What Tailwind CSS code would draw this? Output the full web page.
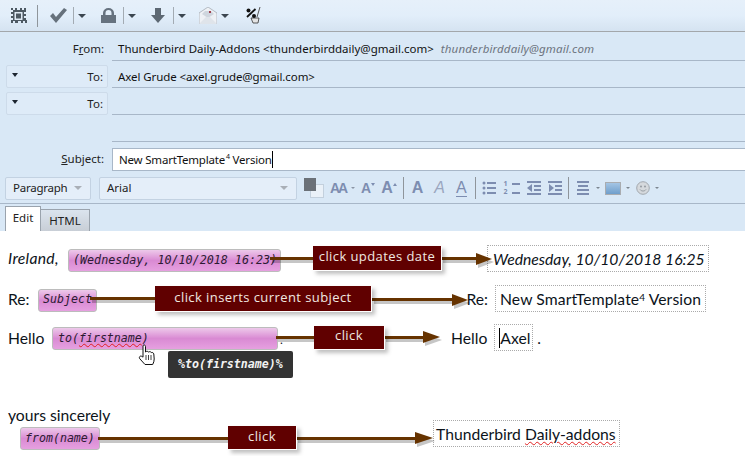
<!DOCTYPE html>
<html>
<head>
    <title>SmartTemplate compose</title>
    <meta charset="utf-8">
    <script src="https://cdn.jsdelivr.net/npm/@tailwindcss/browser@4"></script>
</head>
<body class="bg-white">
<div class="w-[745px] h-[456px] overflow-hidden relative font-['Noto_Sans',sans-serif] text-[11.5px] text-[#111]">

    <!-- Main toolbar -->
    <div class="h-[32px] flex items-center bg-gradient-to-b from-[#e6f0fa] via-[#e2eefa] to-[#d5e3f1] border-b border-[#a3a7ab] relative text-[#5f6b78]">
        <svg class="ml-[10px] w-[17px] h-[16px]" viewBox="0 0 17 16" fill="#4d5963"><path d="M1 0h2v2h2V0h2v2h3V0h2v2h2V0h2v4h-2v2h2v2h-2v2h2v2h2v3h-3v-2h-2v2h-2v-2h-3v2H5v-2H3v2H1v-3h2v-2H1V8h2V6H1V4h2V2H1z" /><rect x="4.500" y="4" width="8" height="8" fill="#dfeaf5"/><rect x="6" y="5.500" width="5" height="5" /></svg>
        <div class="ml-[10px] w-px h-[22px] bg-[#8f959b]"></div>
        <svg class="ml-[12px] w-[17px] h-[15px]" viewBox="0 0 17 15" fill="#66717c"><path d="M0 8l3-3 3 4 8-9 3 2-11 13z"/></svg>
        <div class="ml-[6px] w-px h-[17px] bg-[#a3abb3]"></div>
        <div class="ml-[4px] w-0 h-0 border-x-[4px] border-x-transparent border-t-[4px] border-t-[#3c4650]"></div>
        <svg class="ml-[15px] w-[15px] h-[15px]" viewBox="0 0 15 15" fill="#66727f"><path d="M0 7h2V5a5.500 5 0 0 1 11 0v2h2v8H0zM4.500 7h6V5a3 3 0 0 0-6 0z"/></svg>
        <div class="ml-[7px] w-px h-[17px] bg-[#a3abb3]"></div>
        <div class="ml-[4px] w-0 h-0 border-x-[4px] border-x-transparent border-t-[4px] border-t-[#3c4650]"></div>
        <svg class="ml-[15px] w-[14px] h-[15px]" viewBox="0 0 14 15" fill="#5d6873"><path d="M4 0h6v7h4l-7 8-7-8h4z"/></svg>
        <div class="ml-[8px] w-px h-[17px] bg-[#a3abb3]"></div>
        <div class="ml-[4px] w-0 h-0 border-x-[4px] border-x-transparent border-t-[4px] border-t-[#3c4650]"></div>
        <svg class="ml-[13px] w-[18px] h-[17px]" viewBox="0 0 18 17"><path d="M0 6L9 0l9 6v11H0z" fill="#eef1f5" stroke="#a5acb5" stroke-width=".8"/><path d="M3 7l3-3h6l3 3-6 4z" fill="#cfd6de"/><rect x="10" y="4" width="2" height="2" fill="#a0424f"/><path d="M0 17l7-7h4l7 7z" fill="#dfe4ea"/></svg>
        <div class="ml-[4px] w-0 h-0 border-x-[4px] border-x-transparent border-t-[4px] border-t-[#3c4650]"></div>
        <svg class="ml-[17px] w-[15px] h-[17px]" viewBox="0 0 15 17"><path d="M11 10L14 0" stroke="#555" stroke-width="1" fill="none"/><path d="M5 11h8l-1 5H7z" fill="#e4e4e4" stroke="#333" stroke-width=".8"/><circle cx="2.500" cy="3.500" r="2" fill="#111"/><circle cx="8" cy="9" r="2" fill="#111"/><path d="M1 10L9.500 2" stroke="#111" stroke-width="1.800"/></svg>
    </div>

    <!-- Address header -->
    <div class="h-[199px] bg-[#d9e8f6] relative">
        <div class="flex h-[29px]">
            <div class="w-[104px] text-right pt-[9px] leading-[16px] text-[#222]">F<u>r</u>om:</div>
            <div class="ml-[8px] flex-1 border-b border-[#a8b7c8] pl-[6px] pt-[9px] leading-[16px] whitespace-nowrap">Thunderbird Daily-Addons &lt;thunderbirddaily@gmail.com&gt;<span class="ml-[7px] italic text-[#6d7480] tracking-[.15px]">thunderbirddaily@gmail.com</span></div>
        </div>
        <div class="flex h-[27px]">
            <div class="ml-[6px] mt-[4px] w-[102px] h-[23px] border border-[#cddbea] rounded-[2px] bg-[#deebf8] flex items-center justify-between pl-[5px] pr-[4px]">
                <span class="w-0 h-0 border-x-[3.500px] border-x-transparent border-t-[4px] border-t-[#1c2530] mb-[3px]"></span>
                <span class="text-[#222]">To:</span>
            </div>
            <div class="ml-[4px] flex-1 border-b border-[#a8b7c8] pl-[6px] pt-[8px] leading-[16px] tracking-[-.09px]">Axel Grude &lt;axel.grude@gmail.com&gt;</div>
        </div>
        <div class="flex h-[27px]">
            <div class="ml-[6px] mt-[4px] w-[102px] h-[23px] border border-[#cddbea] rounded-[2px] bg-[#deebf8] flex items-center justify-between pl-[5px] pr-[4px]">
                <span class="w-0 h-0 border-x-[3.500px] border-x-transparent border-t-[4px] border-t-[#1c2530] mb-[3px]"></span>
                <span class="text-[#222]">To:</span>
            </div>
            <div class="ml-[4px] flex-1 border-b border-[#a8b7c8]"></div>
        </div>
        <div class="h-[27px] ml-[112px] border-b border-[#a8b7c8]"></div>
        <div class="flex h-[23px] mt-[6px]">
            <div class="w-[104px] text-right leading-[22px] text-[#222]"><u>S</u>ubject:</div>
            <div class="ml-[8px] flex-1 bg-white border-y border-l border-[#a8b7c8] pl-[6px] leading-[21px] flex items-center tracking-[-.2px]">New SmartTemplate<sup class="text-[7px] top-[-3px] ml-px">4</sup>&nbsp;Version<span class="w-px h-[17px] bg-black"></span></div>
        </div>

        <!-- Format bar -->
        <div class="h-[33px] pt-[2px] flex items-center border-b border-[#a8b7c8] relative text-[#7d8db0]">
            <div class="ml-[5px] w-[86px] h-[23px] bg-[#e4eef9] border border-[#c3d2e2] rounded-[2px] flex items-center justify-between pl-[7px] pr-[8px] text-[#222] tracking-[-.25px]">Paragraph<span class="w-0 h-0 border-x-[4px] border-x-transparent border-t-[4px] border-t-[#a9afb7]"></span></div>
            <div class="ml-[8px] w-[198px] h-[23px] bg-[#e4eef9] border border-[#c3d2e2] rounded-[2px] flex items-center justify-between pl-[7px] pr-[8px] text-[#222]">Arial<span class="w-0 h-0 border-x-[4px] border-x-transparent border-t-[4px] border-t-[#a9afb7]"></span></div>
            <div class="ml-[7px] w-[21px] h-[21px] relative">
                <div class="absolute left-[6px] top-[6px] w-[14px] h-[14px] bg-[#eaf1f8] border border-[#c3d0dd]"></div>
                <div class="absolute left-0 top-0 w-[12px] h-[13px] bg-[#6b7178]"></div>
            </div>
            <span class="ml-[5px] w-[20px] font-bold text-[14px] leading-none font-['Liberation_Sans',sans-serif] tracking-[-2px]">AA</span>
            <span class="ml-[1px] w-0 h-0 border-x-[2px] border-x-transparent border-t-[2px] border-t-[#8b95a5]"></span>
            <span class="ml-[6px] font-bold text-[14px] leading-none font-['Liberation_Sans',sans-serif]">A</span>
            <span class="w-0 h-0 border-x-[2px] border-x-transparent border-t-[3px] border-t-[#7d8db0] mb-[8px]"></span>
            <span class="ml-[6px] font-bold text-[16px] leading-none font-['Liberation_Sans',sans-serif]">A</span>
            <span class="w-0 h-0 border-x-[2px] border-x-transparent border-b-[3px] border-b-[#7d8db0] mb-[8px]"></span>
            <div class="ml-[6px] w-px h-[22px] bg-[#8f959b]"></div>
            <span class="ml-[8px] font-bold text-[16px] leading-none font-['Liberation_Sans',sans-serif]">A</span>
            <span class="ml-[11px] italic text-[16px] leading-none font-['Liberation_Sans',sans-serif] text-[#9aa6bf]">A</span>
            <span class="ml-[11px] text-[16px] leading-none border-b border-[#7d8db0] font-['Liberation_Sans',sans-serif]">A</span>
            <div class="ml-[8px] w-px h-[22px] bg-[#8f959b]"></div>
            <svg class="ml-[6px] w-[14px] h-[14px]" viewBox="0 0 14 14" fill="#7d8db0"><circle cx="2" cy="2" r="1.500"/><circle cx="2" cy="7" r="1.500"/><circle cx="2" cy="12" r="1.500"/><rect x="5" y="1" width="9" height="2"/><rect x="5" y="6" width="9" height="2"/><rect x="5" y="11" width="9" height="2"/></svg>
            <div class="ml-[8px] w-[16px] h-[14px] relative">
                <span class="absolute left-0 top-[-1px] text-[7px] leading-[8px] font-bold">1</span>
                <span class="absolute left-0 top-[7px] text-[7px] leading-[8px] font-bold">2</span>
                <span class="absolute right-0 top-[2px] w-[8px] h-[2px] bg-[#7d8db0]"></span>
                <span class="absolute right-0 top-[11px] w-[8px] h-[2px] bg-[#7d8db0]"></span>
            </div>
            <svg class="ml-[7px] w-[14px] h-[14px]" viewBox="0 0 14 14" fill="#7d8db0"><rect width="14" height="2"/><rect y="12" width="14" height="2"/><rect x="7" y="4" width="7" height="2"/><rect x="7" y="8" width="7" height="2"/><path d="M0 7l5-4v8z"/></svg>
            <svg class="ml-[7px] w-[14px] h-[14px]" viewBox="0 0 14 14" fill="#7d8db0"><rect width="14" height="2"/><rect y="12" width="14" height="2"/><rect x="7" y="4" width="7" height="2"/><rect x="7" y="8" width="7" height="2"/><path d="M6 7L1 3v8z"/></svg>
            <div class="ml-[6px] w-px h-[22px] bg-[#8f959b]"></div>
            <svg class="ml-[8px] w-[13px] h-[14px]" viewBox="0 0 13 14" fill="#7d8db0"><rect width="12" height="2"/><rect x="1" y="4" width="10" height="2"/><rect y="8" width="12" height="2"/><rect y="12" width="12" height="2"/></svg>
            <span class="ml-[6px] w-0 h-0 border-x-[2px] border-x-transparent border-t-[2px] border-t-[#7c8590]"></span>
            <div class="ml-[5px] w-[16px] h-[13px] border border-[#a9acb0] bg-gradient-to-b from-[#a4c5e4] to-[#6f9ecb]"></div>
            <span class="ml-[5px] w-0 h-0 border-x-[2px] border-x-transparent border-t-[2px] border-t-[#7c8590]"></span>
            <svg class="ml-[6px] w-[14px] h-[14px]" viewBox="0 0 14 14"><circle cx="7" cy="7" r="6.300" fill="#d5d9dd" stroke="#a2a8ae" stroke-width="1"/><circle cx="5" cy="5.500" r=".9" fill="#8d949b"/><circle cx="9" cy="5.500" r=".9" fill="#8d949b"/><path d="M4 8.500c1.500 2 4.500 2 6 0" stroke="#8d949b" stroke-width=".9" fill="none"/></svg>
            <span class="ml-[5px] w-0 h-0 border-x-[2px] border-x-transparent border-t-[2px] border-t-[#7c8590]"></span>
        </div>

        <!-- Edit / HTML tabs -->
        <div class="h-[27px] flex items-end pl-[5px]">
            <div class="w-[36px] h-[25px] bg-white border-x border-t border-[#9aa3ad] text-center leading-[22px] text-[#222] relative z-10">Edit</div>
            <div class="w-[49px] h-[22px] bg-gradient-to-b from-[#dbe4ee] to-[#c8ced6] border-r border-t border-[#9aa3ad] text-center leading-[22px] text-[#222]">HTML</div>
        </div>
    </div>

    <!-- Message body -->
    <div class="relative font-['Lato',sans-serif] text-[15.7px] text-[#0c131a] pt-[13px]">
        <div class="flex items-center h-[28px] pl-[8px]">
            <span class="w-[60px] italic tracking-[.3px] pt-[2px]">Ireland,</span>
            <span class="w-[213px] h-[23px] mt-[5px] rounded-[3px] border border-[#bcbcbc] bg-gradient-to-b from-[#edc9ea] via-[#d98ad3] to-[#e6a0e0] flex items-center pl-[4px] font-['DejaVu_Sans_Mono',monospace] italic text-[11.700px] text-[#2c1a33] whitespace-nowrap">(Wednesday, 10/10/2018 16:23)</span>
            <span class="ml-auto mr-[36px] w-[222px] h-[27px] border border-dotted border-[#aaa] flex items-center pl-[5px] pt-[3px] italic whitespace-nowrap">Wednesday, 10/10/2018 16:25</span>
        </div>
        <div class="flex items-center h-[27px] mt-[13px] pl-[8px]">
            <span class="w-[30px] pt-[2px]">Re:</span>
            <span class="w-[59px] h-[23px] mt-[3px] rounded-[3px] border border-[#bcbcbc] bg-gradient-to-b from-[#edc9ea] via-[#d98ad3] to-[#e6a0e0] flex items-center pl-[4px] font-['DejaVu_Sans_Mono',monospace] italic text-[11.600px] text-[#2c1a33]">Subject</span>
            <span class="ml-auto pt-[2px]">Re:</span>
            <span class="ml-[7px] mr-[39px] w-[211px] h-[27px] border border-dotted border-[#aaa] flex items-center pl-[4px] pt-[2px] whitespace-nowrap tracking-[.1px]">New SmartTemplate<sup class="text-[10px] top-[-3px]">4</sup>&nbsp;Version</span>
        </div>
        <div class="flex items-center h-[27px] mt-[12px] pl-[8px]">
            <span class="w-[44px] pt-[2px]">Hello</span>
            <span class="w-[226px] h-[23px] mt-[2px] rounded-[3px] border border-[#bcbcbc] bg-gradient-to-b from-[#edc9ea] via-[#d98ad3] to-[#e6a0e0] flex items-center pl-[5px] font-['DejaVu_Sans_Mono',monospace] italic text-[11.600px] text-[#2c1a33]"><span>to(<span class="underline decoration-wavy decoration-[#e02020] decoration-1">firstname</span>)</span></span>
            <span class="ml-[2px] mt-[5px] text-[12px]">.</span>
            <span class="ml-auto pt-[2px]">Hello</span>
            <span class="ml-[7px] w-[39px] h-[27px] border border-dotted border-[#aaa] flex items-center pl-[4px]"><span class="w-px h-[20px] bg-black"></span><span class="pt-[2px]">Axel</span></span>
            <span class="ml-[4px] mr-[204px] pt-[2px]">.</span>
        </div>
        <div class="mt-[55px] pl-[8px] leading-[18px]">yours sincerely</div>
        <div class="flex mt-[-4px] h-[29px]">
            <span class="ml-[20px] mt-[7px] w-[80px] h-[23px] rounded-[3px] border border-[#bcbcbc] bg-gradient-to-b from-[#edc9ea] via-[#d98ad3] to-[#e6a0e0] flex items-center pl-[4px] font-['DejaVu_Sans_Mono',monospace] italic text-[11.600px] text-[#2c1a33]">from(name)</span>
            <span class="ml-[333px] w-[187px] h-[27px] border border-dotted border-[#aaa] flex items-center pl-[2px] pt-[2px] whitespace-nowrap">Thunderbird&nbsp;<span class="underline decoration-wavy decoration-[#e02020] decoration-1">Daily-addons</span></span>
        </div>
    </div>

    <!-- Annotation arrows -->
    <svg class="absolute left-0 top-0 w-[745px] h-[456px]" viewBox="0 0 745 456">
        <g fill="#000" opacity=".22" transform="translate(2 3)">
            <rect x="270" y="257" width="43" height="3"/><rect x="441" y="257" width="40" height="3"/><path d="M476 253l16 6-16 6z"/>
            <rect x="90" y="297" width="65" height="3"/><rect x="372" y="298" width="84" height="3"/><path d="M452 294l16 6-16 6z"/>
            <rect x="276" y="336" width="38" height="3"/><rect x="384" y="336" width="44" height="3"/><path d="M423 331l17 6-17 6z"/>
            <rect x="98" y="437" width="130" height="3"/><rect x="296" y="437" width="124" height="3"/><path d="M415 432l18 6-18 6z"/>
        </g>
        <g fill="#663300">
            <rect x="270" y="257" width="43" height="3"/><rect x="441" y="257" width="40" height="3"/><path d="M476 253l16 6-16 6z"/>
            <rect x="90" y="297" width="65" height="3"/><rect x="372" y="298" width="84" height="3"/><path d="M452 294l16 6-16 6z"/>
            <rect x="276" y="336" width="38" height="3"/><rect x="384" y="336" width="44" height="3"/><path d="M423 331l17 6-17 6z"/>
            <rect x="98" y="437" width="130" height="3"/><rect x="296" y="437" width="124" height="3"/><path d="M415 432l18 6-18 6z"/>
        </g>
    </svg>

    <!-- Annotation labels -->
    <div class="absolute left-[313px] top-[246px] w-[129px] h-[25px] bg-[#600000] border-r border-b border-white shadow-[3px_3px_4px_rgba(0,0,0,.25)] text-center leading-[20px] text-[13px] tracking-[.42px] text-[#f0e8e0] font-['Open_Sans',sans-serif]">click updates date</div>
    <div class="absolute left-[155px] top-[286px] w-[217px] h-[26px] bg-[#600000] border-r border-b border-white shadow-[3px_3px_4px_rgba(0,0,0,.25)] text-center leading-[23px] text-[13px] tracking-[.42px] text-[#f0e8e0] font-['Open_Sans',sans-serif]">click inserts current subject</div>
    <div class="absolute left-[314px] top-[326px] w-[71px] h-[24px] bg-[#600000] border-r border-b border-white shadow-[3px_3px_4px_rgba(0,0,0,.25)] text-center leading-[18px] text-[13px] tracking-[.42px] text-[#f0e8e0] font-['Open_Sans',sans-serif]">click</div>
    <div class="absolute left-[228px] top-[426px] w-[69px] h-[24px] bg-[#600000] border-r border-b border-white shadow-[3px_3px_4px_rgba(0,0,0,.25)] text-center leading-[21px] text-[13px] tracking-[.42px] text-[#f0e8e0] font-['Open_Sans',sans-serif]">click</div>

    <!-- Tooltip and hand cursor -->
    <div class="absolute left-[168px] top-[351px] w-[125px] h-[27px] rounded-[2px] bg-[#333] text-[#f2f2f2] font-['DejaVu_Sans_Mono',monospace] italic font-bold text-[11.600px] leading-[27px] pl-[10px]">%to(firstname)%</div>
    <svg class="absolute left-[138px] top-[344px] w-[18px] h-[23px]" viewBox="0 0 18 23"><path d="M5 1.500c1-1 2.500-.5 2.500 1V8c1-1 2 -1 3 0 1-.5 2-.5 2.800.5 1-.3 2.200.2 2.500 1.500l.4 5c0 2-.5 3.500-1.500 5.500H7L2 15c-1-1-.8-2.300.2-2.800 1-.4 2 .2 2.800 1z" fill="#fff" stroke="#111" stroke-width="1"/><path d="M8 11v5M10.500 11v5M13 11v5" stroke="#111" stroke-width=".8"/></svg>
</div>
</body>
</html>
